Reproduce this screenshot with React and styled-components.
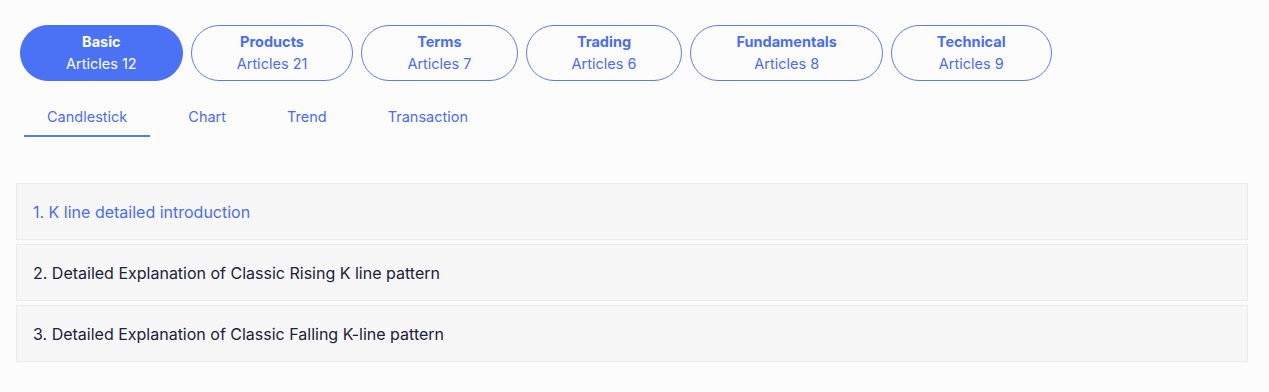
import React, { useState } from "react";
import styled, { createGlobalStyle } from "styled-components";

const Global = createGlobalStyle`
  html, body { margin: 0; padding: 0; background: #fdfcfc; }
  body { font-family: Inter, "Noto Sans", sans-serif; -webkit-font-smoothing: antialiased; }
`;

const Page = styled.div`
  padding: 25px 21px 0 16px;
  display: flex;
  flex-direction: column;
`;

const PillRow = styled.div`
  display: flex;
  gap: 8px;
  padding-left: 4px;
`;

const Pill = styled.button`
  box-sizing: border-box;
  height: 56px;
  padding: 0 45px;
  border-radius: 28px;
  border: 1px solid ${(p) => (p.$active ? "#4b72f5" : "#5a7de6")};
  background: ${(p) => (p.$active ? "#4b72f5" : "transparent")};
  color: ${(p) => (p.$active ? "#ffffff" : "#4a6ef0")};
  font-family: inherit;
  display: flex;
  flex-direction: column;
  align-items: center;
  justify-content: center;
  cursor: pointer;
`;

const PillTitle = styled.span`
  font-size: 14.5px;
  font-weight: 700;
  line-height: 22px;
`;

const PillCount = styled.span`
  font-size: 14.5px;
  font-weight: 400;
  line-height: 22px;
`;

const TabRow = styled.div`
  display: flex;
  gap: 15px;
  margin-top: 16px;
  padding-left: 8px;
`;

const Tab = styled.div`
  box-sizing: border-box;
  height: 40px;
  padding: 0 23px;
  display: flex;
  align-items: center;
  font-size: 14.5px;
  color: #4a6ef0;
  cursor: pointer;
  border-bottom: 2px solid ${(p) => (p.$active ? "#5a7fe0" : "transparent")};
`;

const List = styled.div`
  display: flex;
  flex-direction: column;
  gap: 4px;
  margin-top: 46px;
`;

const Item = styled.div`
  box-sizing: border-box;
  height: 57px;
  background: #f7f7f7;
  border: 1px solid #ececec;
  display: flex;
  align-items: center;
  padding: 0 16px;
  font-size: 16px;
  color: ${(p) => (p.$active ? "#4a6ef0" : "#1b2140")};
  cursor: pointer;
`;

const categories = [
  { name: "Basic", count: 12 },
  { name: "Products", count: 21 },
  { name: "Terms", count: 7 },
  { name: "Trading", count: 6 },
  { name: "Fundamentals", count: 8 },
  { name: "Technical", count: 9 },
];

const tabs = ["Candlestick", "Chart", "Trend", "Transaction"];

const items = [
  "1. K line detailed introduction",
  "2. Detailed Explanation of Classic Rising K line pattern",
  "3. Detailed Explanation of Classic Falling K-line pattern",
];

export default function App() {
  const [cat, setCat] = useState(0);
  const [tab, setTab] = useState(0);
  return (
    <>
      <Global />
      <Page>
        <PillRow>
          {categories.map((c, i) => (
            <Pill key={c.name} $active={i === cat} onClick={() => setCat(i)}>
              <PillTitle>{c.name}</PillTitle>
              <PillCount>Articles {c.count}</PillCount>
            </Pill>
          ))}
        </PillRow>
        <TabRow>
          {tabs.map((t, i) => (
            <Tab key={t} $active={i === tab} onClick={() => setTab(i)}>
              {t}
            </Tab>
          ))}
        </TabRow>
        <List>
          {items.map((t, i) => (
            <Item key={t} $active={i === 0}>
              {t}
            </Item>
          ))}
        </List>
      </Page>
    </>
  );
}
